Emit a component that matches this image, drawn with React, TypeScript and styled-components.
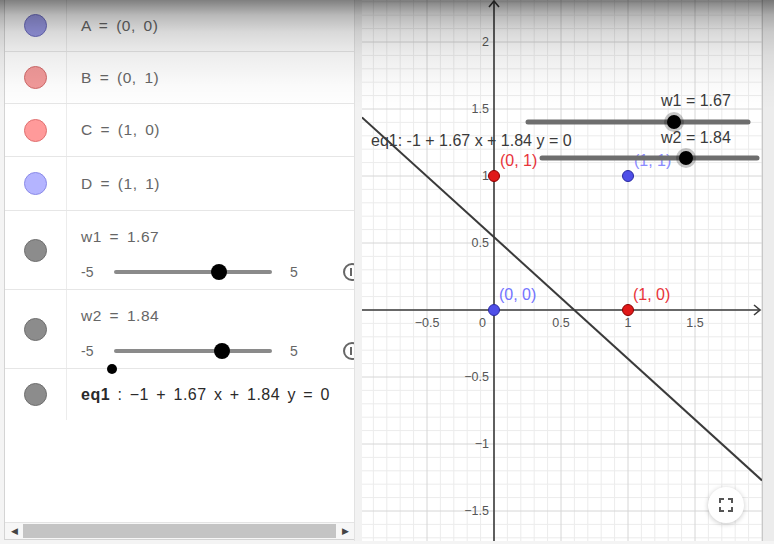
import React from "react";
import styled, { createGlobalStyle } from "styled-components";

const GlobalStyle = createGlobalStyle`
  body {
    margin: 0;
    background: #f4f4f4;
  }
`;

const Page = styled.div`
  position: relative;
  width: 774px;
  height: 544px;
  display: flex;
  overflow: hidden;
  background: #f4f4f4;
  font-family: "Liberation Sans", Arial, sans-serif;
`;

const TopShade = styled.div`
  position: absolute;
  top: 0;
  left: 0;
  right: 0;
  height: 110px;
  pointer-events: none;
  background: linear-gradient(
    to bottom,
    rgba(0, 0, 0, 0.5) 0px,
    rgba(0, 0, 0, 0.28) 15px,
    rgba(0, 0, 0, 0.15) 32px,
    rgba(0, 0, 0, 0.07) 55px,
    rgba(0, 0, 0, 0.02) 85px,
    rgba(0, 0, 0, 0) 110px
  );
`;

const AlgebraPanel = styled.div`
  width: 349px;
  height: 539px;
  margin-left: 4px;
  background: #fff;
  border-left: 1px solid #d4d4d4;
  border-bottom: 1px solid #d4d4d4;
  display: flex;
  flex-direction: column;
  overflow: hidden;
`;

const RowList = styled.div`
  flex: 1;
  display: flex;
  flex-direction: column;
`;

const Row = styled.div<{ $h: number; $last?: boolean }>`
  position: relative;
  display: grid;
  grid-template-columns: 62px 1fr;
  height: ${(p) => p.$h}px;
  border-bottom: ${(p) => (p.$last ? "none" : "1px solid #e6e6e6")};
  box-sizing: border-box;
`;

const MarkerCell = styled.div`
  display: flex;
  align-items: center;
  justify-content: center;
  border-right: 1px solid #ececec;
`;

const Marker = styled.span<{ $fill: string; $stroke: string }>`
  width: 21px;
  height: 21px;
  border-radius: 50%;
  background: ${(p) => p.$fill};
  border: 1px solid ${(p) => p.$stroke};
`;

const Content = styled.div<{ $slider?: boolean }>`
  display: flex;
  flex-direction: column;
  justify-content: center;
  padding-left: 14px;
  padding-top: ${(p) => (p.$slider ? 8 : 0)}px;
  gap: 17px;
  min-width: 0;
`;

const Expr = styled.div<{ $dark?: boolean }>`
  font-size: ${(p) => (p.$dark ? 16 : 15.5)}px;
  color: ${(p) => (p.$dark ? "#2a2a2a" : "#666")};
  word-spacing: ${(p) => (p.$dark ? 2.4 : 3)}px;
  letter-spacing: 0.5px;
  white-space: nowrap;
`;

const Bold = styled.span`
  font-weight: bold;
`;

const SliderLine = styled.div`
  display: flex;
  align-items: center;
  height: 18px;
`;

const Bound = styled.span<{ $w: number }>`
  width: ${(p) => p.$w}px;
  font-size: 14px;
  color: #666;
  flex-shrink: 0;
`;

const Track = styled.div`
  position: relative;
  width: 158px;
  height: 4px;
  margin-right: 18px;
  background: #8a8a8a;
  border-radius: 2px;
  flex-shrink: 0;
`;

const Knob = styled.span`
  position: absolute;
  top: 50%;
  width: 16px;
  height: 16px;
  margin: -8px 0 0 -8px;
  border-radius: 50%;
  background: #000;
`;

const PlayButton = styled.span`
  position: relative;
  width: 14px;
  height: 14px;
  margin-left: 39px;
  border: 2px solid #666;
  border-radius: 50%;
  flex-shrink: 0;

  &::after {
    content: "";
    position: absolute;
    left: 5px;
    top: 3px;
    width: 2px;
    height: 8px;
    background: #666;
  }
`;

const StrayDot = styled.span`
  position: absolute;
  left: 102px;
  bottom: -6px;
  width: 10px;
  height: 10px;
  border-radius: 50%;
  background: #000;
`;

const ScrollBar = styled.div`
  height: 16px;
  display: flex;
  align-items: center;
  background: #f7f7f7;
  border-top: 1px solid #e4e4e4;
`;

const ScrollArrow = styled.span`
  width: 18px;
  text-align: center;
  font-size: 9px;
  color: #444;
`;

const ScrollThumb = styled.div`
  flex: 1;
  height: 14px;
  background: #c4c4c4;
`;

const Divider = styled.div`
  width: 8px;
  height: 541px;
  background: #f2f2f2;
  border-left: 1px solid #e2e2e2;
  box-sizing: border-box;
`;

const Graphics = styled.div`
  position: relative;
  width: 400px;
  height: 541px;
  background: #fff;
  border-right: 1px solid #c8c8c8;
`;

const FullscreenButton = styled.div`
  position: absolute;
  right: 18px;
  bottom: 18px;
  width: 36px;
  height: 36px;
  border-radius: 50%;
  background: #fff;
  box-shadow: 0 1px 5px rgba(0, 0, 0, 0.22);
  display: flex;
  align-items: center;
  justify-content: center;
`;

const RightStrip = styled.div`
  flex: 1;
  height: 541px;
  background: #ececec;
`;

type Item = {
  h: number;
  fill: string;
  stroke: string;
  label: string;
  slider?: number;
  dot?: boolean;
};

const items: Item[] = [
  { h: 52, fill: "#9a9ae6", stroke: "#6d6dc0", label: "A = (0, 0)" },
  { h: 52, fill: "#f29a9a", stroke: "#d06a6a", label: "B = (0, 1)" },
  { h: 53, fill: "#ff9a9a", stroke: "#e07070", label: "C = (1, 0)" },
  { h: 54, fill: "#b4b4ff", stroke: "#8a8ae8", label: "D = (1, 1)" },
  { h: 79, fill: "#8c8c8c", stroke: "#6e6e6e", label: "w1 = 1.67", slider: 1.67 },
  { h: 79, fill: "#8c8c8c", stroke: "#6e6e6e", label: "w2 = 1.84", slider: 1.84, dot: true },
];

// graph coordinates
const OX = 132;
const OY = 310;
const S = 134;
const W = 400;
const H = 541;
const px = (x: number) => OX + x * S;
const py = (y: number) => OY - y * S;
const lineY = (x: number) => (1 - 1.67 * x) / 1.84;

function GraphDrawing() {
  const minor: React.ReactNode[] = [];
  const major: React.ReactNode[] = [];
  for (let i = -10; i <= 21; i++) {
    const x = px(i / 10);
    if (x < 0 || x > W) continue;
    const l = <line key={"vx" + i} x1={x} y1={0} x2={x} y2={H} />;
    if (i % 5 === 0) major.push(l);
    else minor.push(l);
  }
  for (let j = -18; j <= 24; j++) {
    const y = py(j / 10);
    if (y < 0 || y > H) continue;
    const l = <line key={"hy" + j} x1={0} y1={y} x2={W} y2={y} />;
    if (j % 5 === 0) major.push(l);
    else minor.push(l);
  }

  const xl = -OX / S;
  const xr = (W - OX) / S;

  const yLabels: [number, string][] = [
    [2, "2"],
    [1.5, "1.5"],
    [1, "1"],
    [0.5, "0.5"],
    [-0.5, "−0.5"],
    [-1, "−1"],
    [-1.5, "−1.5"],
  ];
  const xLabels: [number, string][] = [
    [-0.5, "−0.5"],
    [0.5, "0.5"],
    [1, "1"],
    [1.5, "1.5"],
  ];

  return (
    <svg width={W} height={H} style={{ display: "block" }}>
      <g stroke="#ececec" strokeWidth={1}>{minor}</g>
      <g stroke="#d6d6d6" strokeWidth={1}>{major}</g>

      {/* axes */}
      <g stroke="#3c3c3c" strokeWidth={1.6} fill="none">
        <line x1={OX} y1={H} x2={OX} y2={1} />
        <polyline points={`${OX - 5},7 ${OX},1 ${OX + 5},7`} />
        <line x1={0} y1={OY} x2={W - 2} y2={OY} />
        <polyline points={`${W - 8},${OY - 5} ${W - 2},${OY} ${W - 8},${OY + 5}`} />
      </g>

      <g fontFamily="Liberation Sans, Arial, sans-serif" fontSize={12.5} fill="#555">
        {yLabels.map(([v, t]) => (
          <text key={t} x={OX - 5} y={py(v) + 4} textAnchor="end">
            {t}
          </text>
        ))}
        {xLabels.map(([v, t]) => (
          <text key={t} x={px(v)} y={OY + 17} textAnchor="middle">
            {t}
          </text>
        ))}
        <text x={OX - 8} y={OY + 17} textAnchor="end">
          0
        </text>
      </g>

      {/* eq1 line */}
      <line
        x1={px(xl)}
        y1={py(lineY(xl))}
        x2={px(xr)}
        y2={py(lineY(xr))}
        stroke="#3a3a3a"
        strokeWidth={2}
      />

      <g fontFamily="Liberation Sans, Arial, sans-serif" fontSize={16}>
        <text x={9} y={146} fill="#3a3a3a">
          eq1: -1 + 1.67 x + 1.84 y = 0
        </text>
        <text x={138} y={166} fill="#e8333a">(0, 1)</text>
        <text x={272} y={166} fill="#8a8aff">(1, 1)</text>
        <text x={137} y={300} fill="#7373ff">(0, 0)</text>
        <text x={271} y={300} fill="#e8333a">(1, 0)</text>
      </g>

      {/* points */}
      <circle cx={px(0)} cy={py(0)} r={5.5} fill="#4f4fe8" stroke="#2a2aa0" strokeWidth={1} />
      <circle cx={px(0)} cy={py(1)} r={5.5} fill="#e01818" stroke="#8a0000" strokeWidth={1} />
      <circle cx={px(1)} cy={py(0)} r={5.5} fill="#e01818" stroke="#8a0000" strokeWidth={1} />
      <circle cx={px(1)} cy={py(1)} r={5.5} fill="#4f4fe8" stroke="#2a2aa0" strokeWidth={1} />

      {/* sliders */}
      <g stroke="#6e6e6e" strokeWidth={5} strokeLinecap="round">
        <line x1={166} y1={122} x2={386} y2={122} />
        <line x1={180} y1={158} x2={395} y2={158} />
      </g>
      <g fontFamily="Liberation Sans, Arial, sans-serif" fontSize={16} fill="#3a3a3a">
        <text x={299} y={106}>w1 = 1.67</text>
        <text x={299} y={143}>w2 = 1.84</text>
      </g>
      <circle cx={312} cy={122} r={10} fill="rgba(0,0,0,0.22)" />
      <circle cx={312} cy={122} r={7} fill="#000" />
      <circle cx={324} cy={158} r={10} fill="rgba(0,0,0,0.22)" />
      <circle cx={324} cy={158} r={7} fill="#000" />
    </svg>
  );
}

function FullscreenIcon() {
  return (
    <svg width="14" height="14" viewBox="0 0 14 14" fill="none" stroke="#555" strokeWidth={2}>
      <path d="M1 5V1h4M9 1h4v4M13 9v4H9M5 13H1V9" />
    </svg>
  );
}

export default function App() {
  return (
    <>
      <GlobalStyle />
      <Page>
        <AlgebraPanel>
          <RowList>
            {items.map((it) => (
              <Row key={it.label} $h={it.h}>
                <MarkerCell>
                  <Marker $fill={it.fill} $stroke={it.stroke} />
                </MarkerCell>
                <Content $slider={it.slider !== undefined}>
                  <Expr>{it.label}</Expr>
                  {it.slider !== undefined && (
                    <SliderLine>
                      <Bound $w={33}>-5</Bound>
                      <Track>
                        <Knob style={{ left: `${((it.slider + 5) / 10) * 100}%` }} />
                      </Track>
                      <Bound $w={14}>5</Bound>
                      <PlayButton />
                    </SliderLine>
                  )}
                </Content>
                {it.dot && <StrayDot />}
              </Row>
            ))}
            <Row $h={51} $last>
              <MarkerCell>
                <Marker $fill="#8c8c8c" $stroke="#6e6e6e" />
              </MarkerCell>
              <Content>
                <Expr $dark>
                  <Bold>eq1</Bold> : −1 + 1.67 x + 1.84 y = 0
                </Expr>
              </Content>
            </Row>
          </RowList>
          <ScrollBar>
            <ScrollArrow>◀</ScrollArrow>
            <ScrollThumb />
            <ScrollArrow>▶</ScrollArrow>
          </ScrollBar>
        </AlgebraPanel>
        <Divider />
        <Graphics>
          <GraphDrawing />
          <FullscreenButton>
            <FullscreenIcon />
          </FullscreenButton>
        </Graphics>
        <RightStrip />
        <TopShade />
      </Page>
    </>
  );
}
